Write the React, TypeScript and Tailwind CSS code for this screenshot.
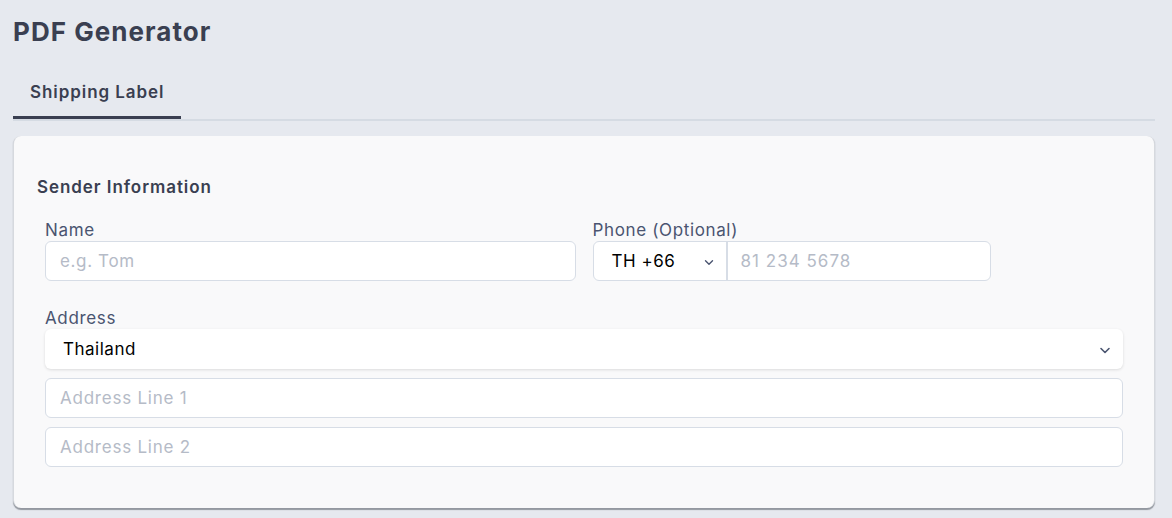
import React from "react";

const Chevron = ({ className = "" }: { className?: string }) => (
  <svg viewBox="0 0 16 16" className={className} fill="none" stroke="currentColor" strokeWidth={1.6} strokeLinecap="round" strokeLinejoin="round">
    <path d="M4 6.5l4 4 4-4" />
  </svg>
);

export default function App() {
  const font = { fontFamily: "Inter, 'Noto Sans', sans-serif" };
  return (
    <div className="min-h-[518px] w-[1172px] bg-[#e6e9ef] pl-[13px] pr-[17px] pt-[14px] pb-[10px]" style={font}>
      <h1 className="text-[26px] leading-[36px] font-bold text-[#3a3f51] tracking-[0.04em]">PDF Generator</h1>
      <div className="mt-[30px] flex border-b-2 border-[#d5dbe3]">
        <div className="px-[17px] pb-[12px] border-b-[3px] border-[#3a3f51] text-[17px] leading-[24px] font-semibold text-[#3a3f51] tracking-[0.055em]">
          Shipping Label
        </div>
      </div>
      <div className="mt-[15px] bg-[#f9f9fa] rounded-[8px] border-x border-[#d6d9de] shadow-[0_1.5px_1px_rgba(80,85,95,0.55)] px-[23px] pt-[39px] pb-[41px] tracking-[0.04em]">
        <h2 className="text-[17px] leading-[24px] font-semibold text-[#3a3f51] tracking-[0.055em]">Sender Information</h2>
        <div className="px-2 mt-[18px]">
          <div className="grid grid-cols-2 gap-x-[17px]">
            <div>
              <label className="block pt-[3px] text-[17px] leading-[21px] text-[#4a5470]">Name</label>
              <div className="h-[40px] bg-white border border-[#d7dde6] rounded-[6px] flex items-center px-[14px] pt-[2px] text-[17px] text-[#b5bbc7]">
                e.g. Tom
              </div>
            </div>
            <div>
              <label className="block pt-[3px] text-[17px] leading-[21px] text-[#4a5470]">Phone (Optional)</label>
              <div className="w-[398px] h-[40px] bg-white border border-[#d7dde6] rounded-[6px] flex">
                <div className="w-[134px] flex items-center justify-between pl-[18px] pr-[10px] pt-[2px] border-r-2 border-[#d7dde6] text-[17px] text-black tracking-[0.03em]">
                  <span>TH +66</span>
                  <Chevron className="w-[14px] h-[14px] text-[#4a5470]" />
                </div>
                <div className="flex items-center px-[13px] pt-[2px] text-[17px] text-[#b5bbc7] tracking-[0.06em]">81 234 5678</div>
              </div>
            </div>
          </div>
          <label className="block mt-[24px] pt-[3px] text-[17px] leading-[21px] text-[#4a5470]">Address</label>
          <div className="flex flex-col gap-[9px]">
            <div className="h-[40px] bg-white rounded-[6px] shadow-[0_1px_3px_rgba(0,0,0,0.12)] flex items-center justify-between pl-[18px] pr-[10px] pt-[1px] text-[17px] text-black tracking-[0.03em]">
              <span>Thailand</span>
              <Chevron className="w-[16px] h-[16px] text-[#4a5470]" />
            </div>
            <div className="h-[40px] bg-white border border-[#d7dde6] rounded-[6px] flex items-center px-[14px] pt-[2px] text-[17px] text-[#b5bbc7] tracking-[0.045em]">
              Address Line 1
            </div>
            <div className="h-[40px] bg-white border border-[#d7dde6] rounded-[6px] flex items-center px-[14px] pt-[2px] text-[17px] text-[#b5bbc7] tracking-[0.045em]">
              Address Line 2
            </div>
          </div>
        </div>
      </div>
    </div>
  );
}
